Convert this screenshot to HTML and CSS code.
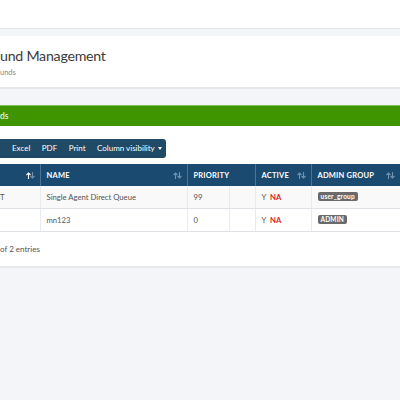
FILE: index.html
```html
<!DOCTYPE html>
<html>
<head>
<meta charset="utf-8">
<link rel="stylesheet" href="styles.css">
</head>
<body>
<div class="topbar"></div>
<div class="main">
  <div class="page-head">
    <h1 class="title">und Management</h1>
    <div class="subtitle">unds</div>
  </div>
  <div class="alert">ds</div>
  <div class="card">
    <div class="btn-group">
      <span class="btn">Excel</span>
      <span class="btn">PDF</span>
      <span class="btn">Print</span>
      <span class="btn">Column visibility <span class="caret"></span></span>
    </div>
    <table class="grid">
      <colgroup>
        <col class="c1"><col class="c2"><col class="c3"><col class="c4"><col class="c5"><col class="c6">
      </colgroup>
      <thead>
        <tr>
          <th><span class="sort"><svg width="9" height="7" viewBox="0 0 9 7"><path d="M2.5 7V1M0.5 3l2-2 2 2" stroke="#ffffff" stroke-width="1.1" fill="none"/><path d="M6.5 0v6M4.5 4l2 2 2-2" stroke="#6f93b1" stroke-width="1.1" fill="none"/></svg></span></th>
          <th>NAME<span class="sort"><svg width="9" height="7" viewBox="0 0 9 7"><path d="M2.5 7V1M0.5 3l2-2 2 2" stroke="#6f93b1" stroke-width="1.1" fill="none"/><path d="M6.5 0v6M4.5 4l2 2 2-2" stroke="#6f93b1" stroke-width="1.1" fill="none"/></svg></span></th>
          <th colspan="2">PRIORITY</th>
          <th>ACTIVE<span class="sort"><svg width="9" height="7" viewBox="0 0 9 7"><path d="M2.5 7V1M0.5 3l2-2 2 2" stroke="#6f93b1" stroke-width="1.1" fill="none"/><path d="M6.5 0v6M4.5 4l2 2 2-2" stroke="#6f93b1" stroke-width="1.1" fill="none"/></svg></span></th>
          <th>ADMIN GROUP<span class="sort"><svg width="9" height="7" viewBox="0 0 9 7"><path d="M2.5 7V1M0.5 3l2-2 2 2" stroke="#6f93b1" stroke-width="1.1" fill="none"/><path d="M6.5 0v6M4.5 4l2 2 2-2" stroke="#6f93b1" stroke-width="1.1" fill="none"/></svg></span></th>
        </tr>
      </thead>
      <tbody>
        <tr class="odd">
          <td class="first">T</td>
          <td>Single Agent Direct Queue</td>
          <td>99</td>
          <td></td>
          <td>Y <span class="na">NA</span></td>
          <td><span class="badge">user_group</span></td>
        </tr>
        <tr>
          <td class="first"></td>
          <td>mn123</td>
          <td>0</td>
          <td></td>
          <td>Y <span class="na">NA</span></td>
          <td><span class="badge">ADMIN</span></td>
        </tr>
      </tbody>
    </table>
    <div class="info">of 2 entries</div>
  </div>
</div>
</body>
</html>
```
FILE: styles.css
```css
html, body {
  margin: 0;
  padding: 0;
}
body {
  background: #f4f5f9;
  font-family: Lato, "Liberation Sans", sans-serif;
  color: #555;
  width: 400px;
  height: 400px;
  overflow: hidden;
}
.topbar {
  height: 28px;
  background: #ffffff;
  border-bottom: 1px solid #e5e7eb;
}
.main {
  padding-top: 7px;
}
.page-head {
  background: #ffffff;
  height: 51px;
  border-bottom: 2px solid #e4e6ea;
  box-sizing: content-box;
  padding: 0;
}
.title {
  margin: 0;
  padding-top: 11px;
  font-size: 14.2px;
  font-weight: 400;
  color: #3a3a3a;
  line-height: 18px;
  letter-spacing: -0.25px;
}
.subtitle {
  font-size: 7.5px;
  color: #888;
  margin-top: 3px;
  line-height: 9px;
}
.alert {
  margin-top: 16px;
  height: 21px;
  line-height: 21px;
  background: #3f9500;
  border-top: 1px solid #7fbf55;
  box-sizing: border-box;
  color: #ffffff;
  font-size: 8.5px;
}
.card {
  background: #ffffff;
  height: 127px;
  border-bottom: 2px solid #e6e8eb;
  padding-top: 13px;
  box-sizing: content-box;
}
.btn-group {
  display: flex;
  align-items: center;
  width: 166px;
  height: 19px;
  background: #1f4b67;
  border-radius: 0 3px 3px 0;
  padding-left: 12px;
  box-sizing: border-box;
}
.btn {
  color: #ffffff;
  font-size: 8px;
  line-height: 19px;
  margin-right: 11.5px;
  white-space: nowrap;
}
.btn:last-child {
  margin-right: 0;
}
.caret {
  display: inline-block;
  width: 0;
  height: 0;
  border-left: 2.5px solid transparent;
  border-right: 2.5px solid transparent;
  border-top: 3px solid #ffffff;
  vertical-align: 1px;
  margin-left: 1px;
}
.grid {
  margin-top: 6px;
  width: 400px;
  border-collapse: collapse;
  table-layout: fixed;
}
.c1 { width: 40px; }
.c2 { width: 147px; }
.c3 { width: 42px; }
.c4 { width: 26px; }
.c5 { width: 56px; }
.c6 { width: 89px; }
.grid th {
  background: #1b4a70;
  color: #ffffff;
  font-size: 7.5px;
  font-weight: 700;
  text-align: left;
  height: 22px;
  padding: 0 0 0 6px;
  border-left: 1px solid #4a7295;
  position: relative;
  letter-spacing: 0.2px;
  white-space: nowrap;
}
.grid th:first-child {
  border-left: none;
}
.sort {
  position: absolute;
  right: 5px;
  top: 8px;
  line-height: 0;
}
.grid td {
  height: 22px;
  font-size: 7.7px;
  color: #555;
  padding: 0 0 0 6px;
  border-bottom: 1px solid #dee2e6;
  border-left: 1px solid #e9ecef;
  white-space: nowrap;
}
.grid td.first {
  border-left: none;
  padding-left: 0;
}
.grid tr.odd td {
  background: #f9f9f9;
}
.na {
  color: #dd1c2b;
  font-weight: 700;
  margin-left: 2px;
}
.badge {
  display: inline-block;
  background: #6a6a6a;
  color: #ffffff;
  font-size: 6.5px;
  font-weight: 700;
  line-height: 9px;
  padding: 0 3px;
  border-radius: 2px;
  letter-spacing: 0.2px;
  vertical-align: 1px;
}
.info {
  margin-top: 12px;
  font-size: 8px;
  color: #555;
  line-height: 10px;
}
```
